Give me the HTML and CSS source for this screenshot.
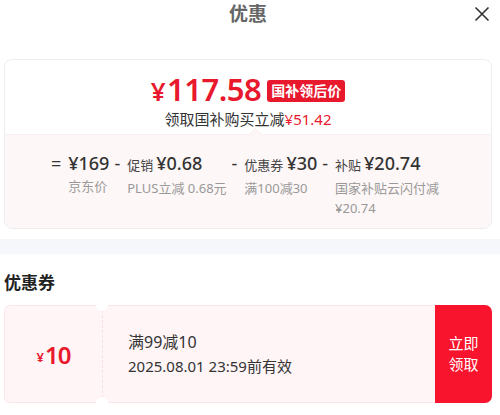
FILE: index.html
```html
<!DOCTYPE html>
<html lang="zh-CN">
<head>
    <meta charset="UTF-8">
    <meta name="viewport" content="width=device-width, initial-scale=1.0">
    <title>优惠</title>
    <link rel="stylesheet" href="styles.css">
</head>
<body>
    <div id="sheet">
        <div class="sheet-header">
            <h1>优惠</h1>
            <button class="close-btn" aria-label="关闭">
                <svg width="16" height="16" viewBox="0 0 16 16"><path d="M1.5 1.5 L14.5 14.5 M14.5 1.5 L1.5 14.5" stroke="#333" stroke-width="1.6" fill="none"/></svg>
            </button>
        </div>

        <div class="price-card">
            <div class="price-top">
                <div class="price-row">
                    <span class="final-price"><span class="yen">¥</span>117.58</span>
                    <span class="price-tag">国补领后价</span>
                </div>
                <div class="price-save">领取国补购买立减<span class="red">¥51.42</span></div>
            </div>
            <div class="price-detail">
                <div class="calc-item">
                    <span class="op">=</span>
                    <div class="calc-body">
                        <div class="calc-main"><span class="amount">¥169</span></div>
                        <div class="calc-desc">京东价</div>
                    </div>
                </div>
                <div class="calc-item">
                    <span class="op">-</span>
                    <div class="calc-body">
                        <div class="calc-main"><span class="label">促销</span><span class="amount">¥0.68</span></div>
                        <div class="calc-desc">PLUS立减 0.68元</div>
                    </div>
                </div>
                <div class="calc-item">
                    <span class="op">-</span>
                    <div class="calc-body">
                        <div class="calc-main"><span class="label">优惠券</span><span class="amount">¥30</span></div>
                        <div class="calc-desc">满100减30</div>
                    </div>
                </div>
                <div class="calc-item">
                    <span class="op">-</span>
                    <div class="calc-body narrow">
                        <div class="calc-main"><span class="label">补贴</span><span class="amount">¥20.74</span></div>
                        <div class="calc-desc">国家补贴云闪付减 ¥20.74</div>
                    </div>
                </div>
            </div>
        </div>
    </div>

    <div class="divider"></div>

    <div id="coupons">
        <h2>优惠券</h2>
        <div class="coupon">
            <div class="coupon-stub"><span class="yen">¥</span>10</div>
            <div class="coupon-body">
                <div class="coupon-title">满99减10</div>
                <div class="coupon-time">2025.08.01 23:59前有效</div>
            </div>
            <div class="coupon-btn">立即<br>领取</div>
        </div>
    </div>
</body>
</html>
```

FILE: styles.css
```css
:root {
    --red: #e8182d;
    --red-btn: #f8142d;
    --text-primary: #222;
    --text-secondary: #999;
    --card-border: #eeeeee;
    --pink-bg: #fdf7f7;
    --coupon-bg: #fff5f6;
    --coupon-border: #fbe7ea;
}

* {
    margin: 0;
    padding: 0;
    box-sizing: border-box;
}

body {
    font-family: 'Noto Sans', 'Noto Sans CJK SC', sans-serif;
    background: #fff;
    color: var(--text-primary);
    width: 500px;
}

#sheet {
    padding: 0 8px 0 4px;
}

.sheet-header {
    position: relative;
    height: 28px;
    margin-bottom: 31px;
}

.sheet-header h1 {
    text-align: center;
    font-size: 19px;
    line-height: 28px;
    font-weight: 700;
    color: #666;
}

.close-btn {
    position: absolute;
    right: 2px;
    top: 6px;
    border: none;
    background: none;
    display: flex;
}

.price-card {
    border: 1px solid var(--card-border);
    border-radius: 8px;
    overflow: hidden;
}

.price-top {
    padding: 10px 0 4px;
    display: flex;
    flex-direction: column;
    align-items: center;
}

.price-row {
    display: flex;
    align-items: center;
    gap: 6px;
    height: 38px;
}

.final-price {
    color: var(--red);
    font-size: 31px;
    font-weight: 600;
    letter-spacing: -0.5px;
}

.final-price .yen {
    font-size: 26px;
    margin-right: 2px;
}

.price-tag {
    background: var(--red);
    color: #fff;
    font-size: 14px;
    font-weight: 700;
    line-height: 22px;
    padding: 0 4px;
    border-radius: 3px;
    margin-top: 4px;
}

.price-save {
    font-size: 15px;
    line-height: 22px;
    color: #333;
}

.red {
    color: var(--red);
}

.price-detail {
    position: relative;
    background: var(--pink-bg);
    border-top: 1px solid #fbeeee;
    padding: 15px 0 10px;
    display: flex;
    justify-content: center;
    gap: 5px;
}

.price-detail::before {
    content: '';
    position: absolute;
    top: -5px;
    left: 246px;
    width: 8px;
    height: 8px;
    background: var(--pink-bg);
    border-left: 1px solid #fbeeee;
    border-top: 1px solid #fbeeee;
    transform: rotate(45deg);
}

.calc-item {
    display: flex;
    gap: 7px;
}

.op {
    font-size: 18px;
    line-height: 26px;
    color: #333;
}

.calc-main {
    display: flex;
    align-items: baseline;
    gap: 3px;
    line-height: 26px;
}

.label {
    font-size: 13px;
    color: #444;
}

.amount {
    font-size: 18px;
    color: #333;
    font-weight: 500;
}

.calc-desc {
    font-size: 13px;
    line-height: 20px;
    color: var(--text-secondary);
}

.narrow {
    width: 110px;
}

.divider {
    height: 15px;
    margin-top: 10px;
    background: #f6f7fa;
}

#coupons {
    padding: 0 8px 0 4px;
}

#coupons h2 {
    font-size: 17px;
    font-weight: 700;
    line-height: 24px;
    margin: 17px 0 10px;
    color: var(--text-primary);
}

.coupon {
    display: flex;
    height: 98px;
    position: relative;
}

.coupon-stub {
    width: 98px;
    background: var(--coupon-bg);
    border: 1px solid var(--coupon-border);
    border-right: none;
    border-radius: 6px 0 0 6px;
    display: flex;
    align-items: center;
    justify-content: center;
    color: var(--red);
    font-size: 24px;
    font-weight: 600;
    letter-spacing: -1px;
}

.coupon-stub .yen {
    font-size: 13px;
    margin-top: 5px;
    margin-right: 2px;
}

.coupon-body {
    position: relative;
    flex: 1;
    background: var(--coupon-bg);
    border: 1px solid var(--coupon-border);
    border-left: 1px dashed #f6e0e3;
    border-right: none;
    padding: 0 0 0 25px;
    display: flex;
    flex-direction: column;
    justify-content: center;
    gap: 2px;
    color: #333;
}

.coupon-body::before,
.coupon-body::after {
    content: '';
    position: absolute;
    left: -7px;
    width: 12px;
    height: 12px;
    border-radius: 50%;
    background: #fff;
}

.coupon-body::before {
    top: -7px;
}

.coupon-body::after {
    bottom: -7px;
}

.coupon-title {
    font-size: 16px;
    line-height: 22px;
}

.coupon-time {
    font-size: 15px;
    line-height: 22px;
}

.coupon-btn {
    width: 57px;
    background: var(--red-btn);
    color: #fff;
    border-radius: 0 7px 7px 0;
    font-size: 15px;
    line-height: 21px;
    display: flex;
    align-items: center;
    justify-content: center;
    text-align: center;
}
```
